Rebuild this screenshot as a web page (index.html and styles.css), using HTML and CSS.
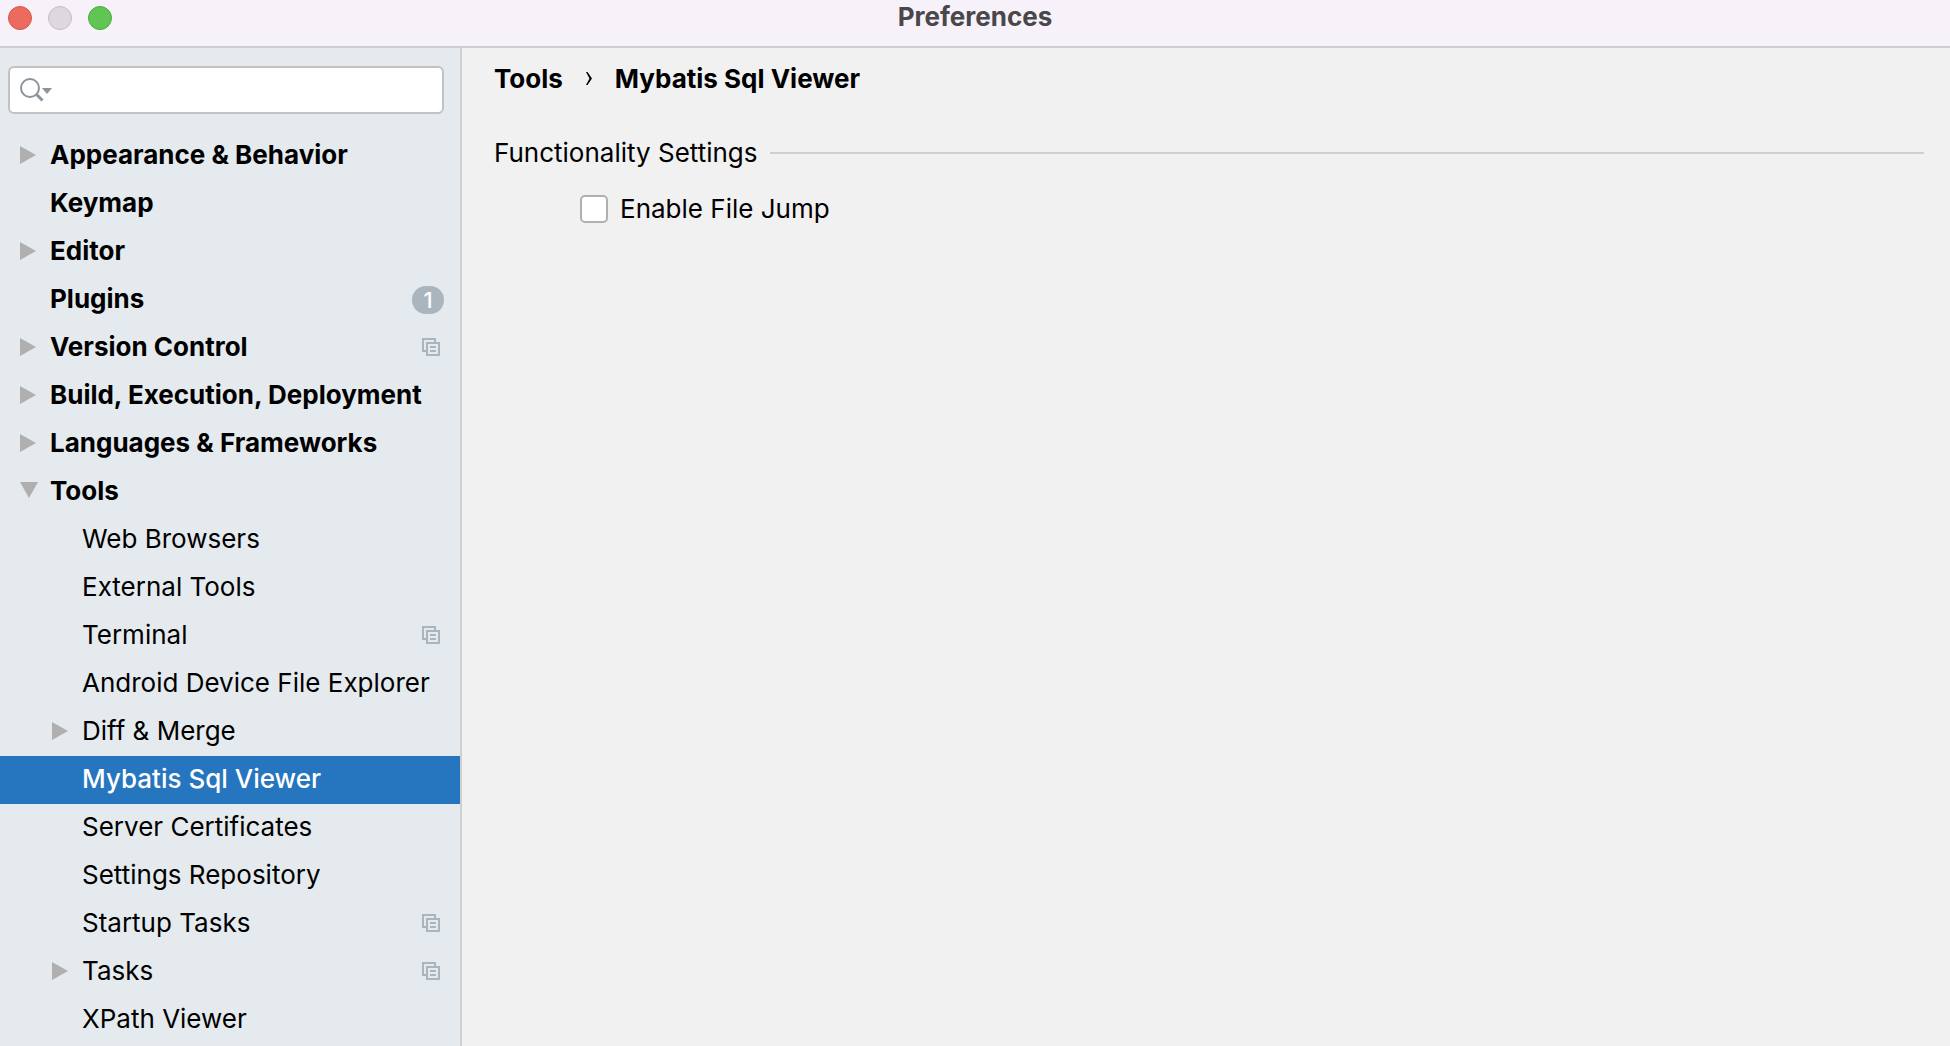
FILE: index.html
```html
<!DOCTYPE html>
<html lang="en">
<head>
<meta charset="utf-8">
<title>Preferences</title>
<link rel="stylesheet" href="styles.css">
</head>
<body>
<svg width="0" height="0" class="defs" aria-hidden="true">
  <symbol id="closed" viewBox="0 0 18 18"><path d="M0 0L16 9L0 18Z" fill="#afafaf"/></symbol>
  <symbol id="open" viewBox="0 0 18 18"><path d="M0 0H18L9 16Z" fill="#afafaf"/></symbol>
  <symbol id="project" viewBox="0 0 18 18"><path d="M0 0H14V4H12V2H2V12H4V14H0ZM4 4H18V18H4ZM6 6V16H16V6ZM8 8H14V10H8ZM8 12H14V14H8Z" fill="#aab5be" fill-rule="evenodd"/></symbol>
</svg>
<header class="titlebar">
  <div class="lights">
    <button class="light close" aria-label="Close"></button>
    <button class="light minimize" aria-label="Minimize" disabled></button>
    <button class="light zoom" aria-label="Zoom"></button>
  </div>
  <h1 class="title">Preferences</h1>
</header>
<div class="window">
  <aside class="sidebar">
    <label class="search">
      <svg class="search-icon" width="32" height="24" viewBox="0 0 32 24" aria-hidden="true">
        <circle cx="10" cy="10" r="9" fill="none" stroke="#8a959e" stroke-width="2"/>
        <path d="M16 16L22.500 22.500" stroke="#8a959e" stroke-width="3"/>
        <path d="M22 10H32L27 16Z" fill="#8a959e"/>
      </svg>
      <input class="search-input" type="text" aria-label="Search settings">
    </label>
    <nav aria-label="Settings">
      <ul class="tree">
        <li><a class="row" href="#"><svg class="arrow"><use href="#closed"/></svg><span class="name">Appearance &amp; Behavior</span></a></li>
        <li><a class="row" href="#"><span class="arrow"></span><span class="name">Keymap</span></a></li>
        <li><a class="row" href="#"><svg class="arrow"><use href="#closed"/></svg><span class="name">Editor</span></a></li>
        <li><a class="row" href="#"><span class="arrow"></span><span class="name">Plugins</span><span class="badge">1</span></a></li>
        <li><a class="row" href="#"><svg class="arrow"><use href="#closed"/></svg><span class="name">Version Control</span><svg class="project"><use href="#project"/></svg></a></li>
        <li><a class="row" href="#"><svg class="arrow"><use href="#closed"/></svg><span class="name">Build, Execution, Deployment</span></a></li>
        <li><a class="row" href="#"><svg class="arrow"><use href="#closed"/></svg><span class="name">Languages &amp; Frameworks</span></a></li>
        <li><a class="row" href="#"><svg class="arrow"><use href="#open"/></svg><span class="name">Tools</span></a>
          <ul class="tree children">
            <li><a class="row" href="#"><span class="arrow"></span><span class="name">Web Browsers</span></a></li>
            <li><a class="row" href="#"><span class="arrow"></span><span class="name">External Tools</span></a></li>
            <li><a class="row" href="#"><span class="arrow"></span><span class="name">Terminal</span><svg class="project"><use href="#project"/></svg></a></li>
            <li><a class="row" href="#"><span class="arrow"></span><span class="name">Android Device File Explorer</span></a></li>
            <li><a class="row" href="#"><svg class="arrow"><use href="#closed"/></svg><span class="name">Diff &amp; Merge</span></a></li>
            <li><a class="row selected" href="#" aria-current="page"><span class="arrow"></span><span class="name">Mybatis Sql Viewer</span></a></li>
            <li><a class="row" href="#"><span class="arrow"></span><span class="name">Server Certificates</span></a></li>
            <li><a class="row" href="#"><span class="arrow"></span><span class="name">Settings Repository</span></a></li>
            <li><a class="row" href="#"><span class="arrow"></span><span class="name">Startup Tasks</span><svg class="project"><use href="#project"/></svg></a></li>
            <li><a class="row" href="#"><svg class="arrow"><use href="#closed"/></svg><span class="name">Tasks</span><svg class="project"><use href="#project"/></svg></a></li>
            <li><a class="row" href="#"><span class="arrow"></span><span class="name">XPath Viewer</span></a></li>
          </ul>
        </li>
      </ul>
    </nav>
  </aside>
  <main class="content">
    <h2 class="breadcrumb"><span>Tools</span><svg width="8" height="16" viewBox="0 0 8 16" aria-hidden="true"><path d="M1 1L2.500 1L7 7.500L2.500 14H1L4.500 7.500Z" fill="#000"/></svg><span>Mybatis Sql Viewer</span></h2>
    <h3 class="group">Functionality Settings</h3>
    <label class="option"><input class="check" type="checkbox">Enable File Jump</label>
  </main>
</div>
</body>
</html>
```
FILE: styles.css
```css
* { box-sizing: border-box; }

body {
  margin: 0;
  min-height: 100vh;
  display: flex;
  flex-direction: column;
  font: 400 26px/32px Inter, "Liberation Sans", sans-serif;
  color: #000;
  background: #f1f1f1;
}

.defs { position: absolute; }

.titlebar {
  display: grid;
  grid-template-columns: 1fr auto 1fr;
  align-items: start;
  height: 48px;
  padding: 0 8px;
  background: #f7f2f9;
  border-bottom: 2px solid #cfcfd1;
}

.lights { display: flex; gap: 16px; padding-top: 6px; }

.light {
  width: 24px;
  height: 24px;
  padding: 0;
  border: 1px solid;
  border-radius: 50%;
}
.close { background: #ed6a5e; border-color: #d65549; }
.minimize { background: #ddd8df; border-color: #c3bec5; }
.zoom { background: #61c554; border-color: #4caa3f; }

.title {
  margin: 0;
  color: #4a474b;
  font-size: 26px;
  font-weight: 700;
  line-height: 34px;
}

.window { flex: 1; display: flex; }

.sidebar {
  flex: 0 0 462px;
  min-width: 0;
  padding-top: 18px;
  background: #e5eaee;
  border-right: 2px solid #cfd0d1;
}

.search {
  display: flex;
  align-items: center;
  height: 48px;
  margin: 0 16px 18px 8px;
  padding: 0 10px;
  gap: 8px;
  background: #fff;
  border: 2px solid #c2c2c2;
  border-radius: 6px;
}
.search-icon { flex: none; }
.search-input {
  flex: 1;
  min-width: 0;
  border: 0;
  outline: 0;
  padding: 0;
  font: inherit;
  background: none;
}

.tree { margin: 0; padding: 0; list-style: none; font-weight: 700; }
.children { font-weight: 400; }

.row {
  display: flex;
  align-items: center;
  height: 48px;
  padding: 0 16px 0 20px;
  color: inherit;
  text-decoration: none;
}
.children .row { padding-left: 52px; }
.row.selected { color: #fff; background: #2675bf; font-weight: 500; }

.arrow { flex: none; width: 18px; height: 18px; margin: 0 12px 2px 0; }
.name { flex: 1; white-space: nowrap; padding-bottom: 2px; }
.project { flex: none; width: 18px; height: 18px; margin: 0 4px 2px 0; }

.badge {
  width: 32px;
  height: 28px;
  border-radius: 14px;
  background: #aab5be;
  color: #fff;
  font-size: 22px;
  line-height: 28px;
  font-weight: 500;
  text-align: center;
}

.content { flex: 1; min-width: 0; padding: 15px 26px 0 32px; }

.breadcrumb {
  display: flex;
  align-items: center;
  gap: 22px;
  margin: 0 0 42px;
  font-size: 26px;
  font-weight: 700;
}

.group {
  display: flex;
  align-items: center;
  gap: 12px;
  margin: 0 0 24px;
  font-size: 26px;
  font-weight: 400;
}
.group::after { content: ""; flex: 1; height: 2px; background: #cfcfcf; }

.option { display: flex; align-items: center; gap: 12px; width: fit-content; margin-left: 86px; }

.check {
  appearance: none;
  width: 28px;
  height: 28px;
  margin: 0;
  background: #fff;
  border: 2px solid #b0b0b0;
  border-radius: 5px;
}
.check:checked { background: #2675bf; }
```
